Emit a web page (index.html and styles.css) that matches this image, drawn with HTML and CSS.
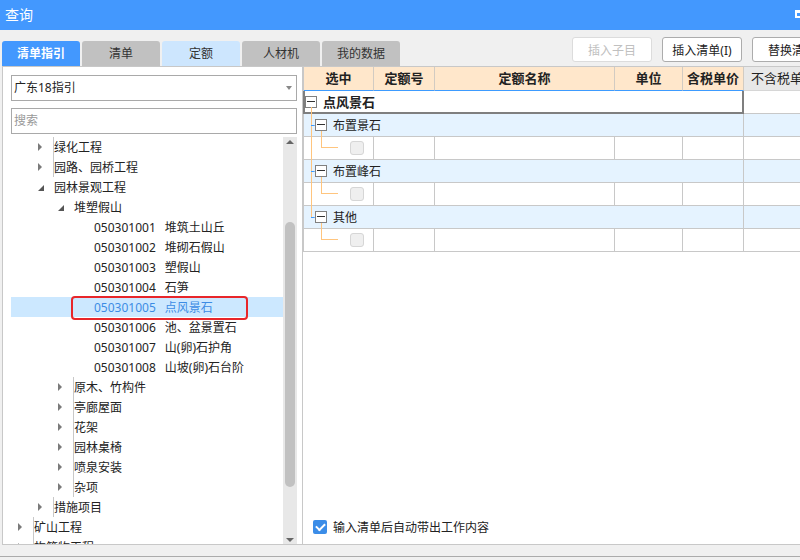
FILE: index.html
```html
<!DOCTYPE html>
<html lang="zh-CN">
<head>
<meta charset="utf-8">
<title>查询</title>
<link rel="stylesheet" href="styles.css">
</head>
<body>
<div class="window">
  <header class="titlebar">
    <span class="title">查询</span>
    <span class="win-btn"></span>
  </header>
  <div class="toolbar">
    <nav class="tabs">
      <div class="tab active">清单指引</div>
      <div class="tab">清单</div>
      <div class="tab light">定额</div>
      <div class="tab">人材机</div>
      <div class="tab">我的数据</div>
    </nav>
    <div class="actions">
      <button class="btn" disabled>插入子目</button>
      <button class="btn">插入清单(I)</button>
      <button class="btn">替换清单</button>
    </div>
  </div>
  <main class="main">
    <section class="left">
      <div class="select">广东18指引<span class="caret"></span></div>
      <div class="search">搜索</div>
      <div class="tree-wrap">
        <ul class="tree">
          <li class="node l1"><span class="tg c"></span>绿化工程</li>
          <li class="node l1"><span class="tg c"></span>园路、园桥工程</li>
          <li class="node l1"><span class="tg e"></span>园林景观工程</li>
          <li class="node l2"><span class="tg e"></span>堆塑假山</li>
          <li class="node l3"><span class="tg"></span><span class="code">050301001</span><span class="nm">堆筑土山丘</span></li>
          <li class="node l3"><span class="tg"></span><span class="code">050301002</span><span class="nm">堆砌石假山</span></li>
          <li class="node l3"><span class="tg"></span><span class="code">050301003</span><span class="nm">塑假山</span></li>
          <li class="node l3"><span class="tg"></span><span class="code">050301004</span><span class="nm">石笋</span></li>
          <li class="node l3 sel"><span class="tg"></span><span class="code">050301005</span><span class="nm">点风景石</span></li>
          <li class="node l3"><span class="tg"></span><span class="code">050301006</span><span class="nm">池、盆景置石</span></li>
          <li class="node l3"><span class="tg"></span><span class="code">050301007</span><span class="nm">山(卵)石护角</span></li>
          <li class="node l3"><span class="tg"></span><span class="code">050301008</span><span class="nm">山坡(卵)石台阶</span></li>
          <li class="node l2"><span class="tg c"></span>原木、竹构件</li>
          <li class="node l2"><span class="tg c"></span>亭廊屋面</li>
          <li class="node l2"><span class="tg c"></span>花架</li>
          <li class="node l2"><span class="tg c"></span>园林桌椅</li>
          <li class="node l2"><span class="tg c"></span>喷泉安装</li>
          <li class="node l2"><span class="tg c"></span>杂项</li>
          <li class="node l1"><span class="tg c"></span>措施项目</li>
          <li class="node l0"><span class="tg c"></span>矿山工程</li>
          <li class="node l0"><span class="tg c"></span>构筑物工程</li>
        </ul>
        <div class="scrollbar">
          <span class="arr up"></span>
          <span class="thumb"></span>
          <span class="arr down"></span>
        </div>
      </div>
    </section>
    <section class="right">
      <div class="grid">
        <div class="ghead">
          <div class="h c1">选中</div>
          <div class="h c2">定额号</div>
          <div class="h c3">定额名称</div>
          <div class="h c4">单位</div>
          <div class="h c5">含税单价</div>
          <div class="h c6">不含税单价</div>
        </div>
        <div class="grow root">
          <div class="c focus"><span class="box"></span><b class="rtext">点风景石</b><i class="ln rv"></i></div>
          <div class="c c6"></div>
        </div>
        <div class="grow group">
          <div class="c span"><i class="ln v"></i><i class="ln h"></i><span class="box gbox"></span>布置景石<i class="ln vb"></i></div>
          <div class="c c6"></div>
        </div>
        <div class="grow leaf">
          <div class="c c1"><i class="ln v"></i><i class="ln lv"></i><i class="ln lh"></i><span class="chk"></span></div>
          <div class="c c2"></div><div class="c c3"></div><div class="c c4"></div><div class="c c5"></div><div class="c c6"></div>
        </div>
        <div class="grow group">
          <div class="c span"><i class="ln v"></i><i class="ln h"></i><span class="box gbox"></span>布置峰石<i class="ln vb"></i></div>
          <div class="c c6"></div>
        </div>
        <div class="grow leaf">
          <div class="c c1"><i class="ln v"></i><i class="ln lv"></i><i class="ln lh"></i><span class="chk"></span></div>
          <div class="c c2"></div><div class="c c3"></div><div class="c c4"></div><div class="c c5"></div><div class="c c6"></div>
        </div>
        <div class="grow group">
          <div class="c span"><i class="ln vh"></i><i class="ln h"></i><span class="box gbox"></span>其他<i class="ln vb"></i></div>
          <div class="c c6"></div>
        </div>
        <div class="grow leaf">
          <div class="c c1"><i class="ln lv"></i><i class="ln lh"></i><span class="chk"></span></div>
          <div class="c c2"></div><div class="c c3"></div><div class="c c4"></div><div class="c c5"></div><div class="c c6"></div>
        </div>
      </div>
      <label class="auto"><span class="cb"></span>输入清单后自动带出工作内容</label>
    </section>
  </main>
  <div class="statusbar"></div>
</div>
</body>
</html>
```

FILE: styles.css
```css
* { box-sizing: border-box; margin: 0; padding: 0; }
html, body { width: 800px; height: 560px; overflow: hidden; }
body {
  background: #f0f0f0;
  font-family: "Noto Sans", "Noto Sans CJK SC", sans-serif;
  font-size: 12px;
  color: #222;
}
.window { width: 800px; height: 560px; display: flex; flex-direction: column; overflow: hidden; }

/* title bar */
.titlebar {
  height: 30px; flex: none; background: #4398fe; color: #fff;
  display: flex; align-items: center; justify-content: space-between; padding-left: 5px;
}
.title { font-size: 14px; line-height: 30px; }
.win-btn { width: 10px; height: 8px; border: 2px solid #fff; border-top-width: 3px; margin-right: -5px; margin-top: -2px; }

/* toolbar */
.toolbar { height: 36px; flex: none; display: flex; }
.tabs { display: flex; gap: 2px; margin-left: 2px; align-self: flex-end; }
.tab {
  width: 78px; height: 25px; line-height: 25px; text-align: center;
  background: #c1c1c1; border-radius: 3px 3px 0 0; color: #333;
}
.tab.active { background: #4398fe; color: #fff; font-weight: bold; }
.tab.light { background: #cde6fe; }
.actions { display: flex; gap: 10px; margin-left: 172px; margin-top: 7px; flex: none; align-self: flex-start; }
.btn {
  width: 80px; height: 25px; font: inherit; font-size: 12px; background: #fff;
  border: 1px solid #acacac; border-radius: 3px; color: #222;
}
.btn:disabled { color: #c0c0c0; border-color: #dcdcdc; }

/* main */
.main {
  flex: none; height: 479px; margin-left: 2px; display: flex; background: #fff;
  border: 1px solid #c8c8c8; border-right: 0;
}
.left {
  width: 300px; flex: none; border-right: 1px solid #c8c8c8;
  display: flex; flex-direction: column; padding: 8px 5px 0 8px;
}
.select {
  height: 26px; border: 1px solid #a9a9a9; padding-left: 2px; line-height: 24px;
  display: flex; align-items: center; flex: none;
}
.caret {
  margin-left: auto; margin-right: 4px; width: 0; height: 0;
  border-left: 3px solid transparent; border-right: 3px solid transparent; border-top: 4px solid #888;
}
.search {
  height: 26px; margin-top: 7px; border: 1px solid #a9a9a9; padding-left: 2px;
  line-height: 24px; color: #999; flex: none;
}
.tree-wrap { margin-top: 3px; flex: 1; min-height: 0; display: flex; overflow: hidden; }
.tree { flex: 1; list-style: none; overflow: hidden; }
.node { height: 20px; display: flex; align-items: center; white-space: nowrap; color: #222; position: relative; }
.l0 { padding-left: 6px; }
.l1 { padding-left: 26px; }
.l2 { padding-left: 46px; }
.l3 { padding-left: 66px; }
.tg { width: 17px; height: 20px; flex: none; position: relative; }
.tg.c::before {
  content: ""; position: absolute; left: 1px; top: 6px;
  border-left: 4px solid #7a7a7a; border-top: 4px solid transparent; border-bottom: 4px solid transparent;
}
.tg.e::before {
  content: ""; position: absolute; left: 1px; top: 8px;
  border-right: 6px solid #555; border-top: 6px solid transparent;
}
.nm { margin-left: 9px; }
.node.sel { background: #cce8ff; color: #3c8ce4; }
.node.sel::after {
  content: ""; position: absolute; left: 60px; top: -1px; width: 173px; height: 20px;
  border: 2px solid #e8262a; border-radius: 4px;
}
.scrollbar { width: 14px; flex: none; background: #e8e8e8; display: flex; flex-direction: column; }
.arr { width: 0; height: 0; border-left: 4px solid transparent; border-right: 4px solid transparent; margin-left: 3px; }
.arr.up { border-bottom: 4px solid #666; margin-top: 3px; }
.thumb { width: 10px; height: 265px; margin-left: 2px; margin-top: 78px; border-radius: 5px; background: #c1c1c1; }
.arr.down { border-top: 4px solid #666; margin-top: auto; margin-bottom: 2px; }

/* right grid */
.right { flex: 1; min-width: 0; display: flex; flex-direction: column; overflow: hidden; }
.grid { width: 560px; }
.ghead { display: flex; height: 24px; border-left: 1px solid #c8c8c8; }
.h {
  height: 24px; background: #ffe7cb; border-right: 1px solid #d2cbc2; border-bottom: 1px solid #3d9bff;
  font-weight: bold; font-size: 13px; line-height: 23px; text-align: center; color: #222;
}
.h.c6 { background: #e8e8e8; border-bottom-color: #d6d6d6; font-weight: normal; text-align: left; padding-left: 7px; }
.c1 { width: 70px; flex: none; }
.c2 { width: 61px; flex: none; }
.c3 { width: 180px; flex: none; }
.c4 { width: 68px; flex: none; }
.c5 { width: 61px; flex: none; }
.c6 { width: 100px; flex: none; }
.grow { display: flex; height: 23px; border-left: 1px solid #c8c8c8; border-bottom: 1px solid #c8c8c8; }
.grow.root { border-left: 0; border-bottom: 0; }
.c { position: relative; display: flex; align-items: center; border-right: 1px solid #c8c8c8; }
.focus {
  width: 441px; flex: none; height: 23px; border: 2px solid #7f7f7f; border-top: 0;
}
.root .c6 { height: 23px; border-bottom: 1px solid #c8c8c8; }
.rtext { font-size: 13px; font-weight: bold; margin-left: 6px; }
.group { background: #e5f3ff; }
.span { width: 440px; flex: none; }
.box {
  width: 12px; height: 12px; flex: none; border: 1px solid #808080; background: #fff; position: relative;
}
.box::after { content: ""; position: absolute; left: 1px; right: 1px; top: 4px; height: 1px; background: #333; }
.gbox { margin-left: 11px; margin-right: 6px; }
.ln { position: absolute; background: #ffc57e; }
.ln.rv { left: 6px; top: 16px; bottom: -2px; width: 1px; }
.ln.v { left: 7px; top: 0; bottom: -1px; width: 1px; }
.ln.vh { left: 7px; top: 0; height: 12px; width: 1px; }
.ln.h { left: 7px; top: 11px; width: 4px; height: 1px; }
.ln.vb { left: 17px; top: 17px; bottom: -1px; width: 1px; }
.ln.lv { left: 17px; top: 0; height: 11px; width: 1px; }
.ln.lh { left: 17px; top: 10px; width: 17px; height: 1px; }
.chk {
  margin-left: 46px; width: 14px; height: 14px; border: 1px solid #d6d6d6;
  background: #efefef; border-radius: 3px;
}

.auto {
  margin-top: auto; margin-bottom: 7px; height: 20px; padding-left: 10px;
  display: flex; align-items: center; color: #222;
}
.cb {
  width: 14px; height: 14px; background: #3b8de8; border-radius: 2px; margin-right: 6px;
  display: flex; align-items: center; justify-content: center;
}
.cb::after {
  content: ""; width: 7px; height: 4px; border-left: 2px solid #fff; border-bottom: 2px solid #fff;
  transform: rotate(-45deg); margin-top: -2px;
}

.statusbar { height: 12px; flex: none; border-bottom: 1px solid #ababab; }
```
